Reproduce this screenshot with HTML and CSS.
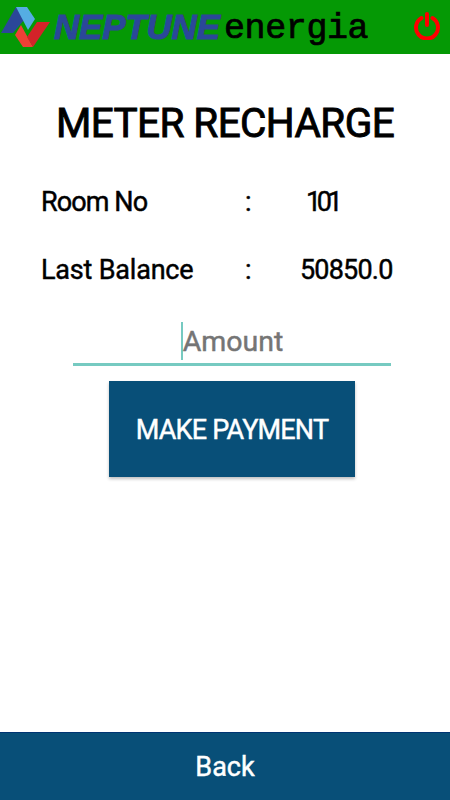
FILE: index.html
```html
<!DOCTYPE html>
<html>
    <head>
        <meta charset="utf-8">
        <title>Meter Recharge</title>
        <link rel="stylesheet" href="styles.css">
    </head>
    <body>
        <div class="header">
            <svg class="logo" width="50" height="50" viewBox="0 0 50 50">
                <path fill="#2b4799" d="M1 33L16 7L24 20L13 33Z"/>
                <path fill="#55ade3" d="M16 7H27L35 19L28 30Z"/>
                <path fill="#ef4036" d="M15 35L21 25L33 47H23Z"/>
                <path fill="#d32329" d="M27 37L37 22H50L33 47Z"/>
            </svg>
            <span class="brand">NEPTUNE</span>
            <span class="sub">energia</span>
            <svg class="power" width="28" height="30" viewBox="0 0 28 30">
                <path fill="none" stroke="#f00" stroke-width="4" stroke-linecap="round" d="M8.5 8A11 11 0 1 0 19.5 8M14 4V15"/>
            </svg>
        </div>
        <div class="content">
            <h1 class="title">METER RECHARGE</h1>
            <div class="row">
                <span class="label room">Room No</span>
                <span class="colon">:</span>
                <span class="value number">101</span>
            </div>
            <div class="row">
                <span class="label last">Last Balance</span>
                <span class="colon">:</span>
                <span class="value balance">50850.0</span>
            </div>
            <div class="field">
                <span class="cursor"></span>
                <span class="hint">Amount</span>
            </div>
            <div class="button"><span class="pay">MAKE PAYMENT</span></div>
        </div>
        <div class="footer"><span class="back">Back</span></div>
    </body>
</html>
```

FILE: styles.css
```css
body {
    margin: 0;
    height: 800px;
    display: flex;
    flex-direction: column;
    background: #fff;
    font-family: Roboto, sans-serif;
    font-size: 27px;
    font-weight: 400;
    -webkit-text-stroke: 0.45px;
    color: #000;
    overflow: hidden;
    white-space: nowrap;
}
.header {
    display: flex;
    height: 54px;
    background: #059905;
}
.brand {
    width: 170px;
    margin-left: 4px;
    font: italic bold 35px/54px "Liberation Sans", sans-serif;
    letter-spacing: -0.2px;
    color: #2b4799;
    -webkit-text-stroke: 1px;
}
.sub {
    width: 150px;
    font: 35px/58px "Liberation Mono", monospace;
    letter-spacing: -0.4px;
    -webkit-text-stroke: 0.7px;
}
.power {
    margin: 10px 9px 0 auto;
}
.content {
    flex: 1;
    display: flex;
    flex-direction: column;
}
.title {
    margin: 45px 0 0;
    font-size: 40.5px;
    line-height: 49px;
    height: 50px;
    font-weight: 400;
    letter-spacing: -0.6px;
    text-align: center;
    -webkit-text-stroke: 0.9px;
}
.row {
    display: grid;
    grid-template-columns: 204px 60px 1fr;
    height: 68px;
    padding-left: 41px;
    line-height: 70px;
}
.row:nth-of-type(1) {
    margin-top: 18px;
}
.room {
    letter-spacing: -0.9px;
}
.last {
    letter-spacing: -0.2px;
}
.number {
    padding-left: 1px;
    letter-spacing: -4.4px;
}
.balance {
    margin-left: -5px;
    letter-spacing: -0.8px;
}
.field {
    display: flex;
    align-items: center;
    justify-content: center;
    width: 318px;
    height: 41px;
    margin: 19px 0 0 73px;
    border-bottom: 3px solid #76cac1;
    font-size: 28.5px;
    line-height: 34px;
    color: #757575;
}
.cursor {
    width: 2px;
    height: 38px;
    margin-bottom: 4px;
    background: #76cac1;
}
.hint {
    margin-bottom: 2px;
}
.button {
    width: 246px;
    height: 96px;
    margin: 15px 0 0 109px;
    background: #084f78;
    box-shadow: 0 2px 3px rgba(0, 0, 0, 0.25);
    line-height: 98px;
    text-align: center;
    color: #fff;
}
.pay {
    letter-spacing: -0.8px;
}
.footer {
    height: 67px;
    border-top: 1px solid #003472;
    background: #084f78;
    line-height: 69px;
    text-align: center;
    color: #fff;
}
```
